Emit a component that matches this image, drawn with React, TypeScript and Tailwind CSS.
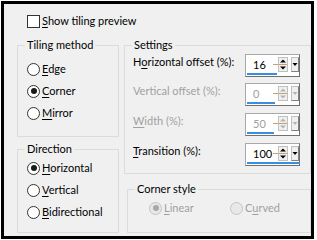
import React from "react";

const font = { fontFamily: 'Lato, "Noto Sans", sans-serif' };

function U({ children }: { children: React.ReactNode }) {
  return <span className="underline underline-offset-[2px] decoration-[1px]">{children}</span>;
}

function Radio({ checked, disabled, label }: { checked?: boolean; disabled?: boolean; label: React.ReactNode }) {
  return (
    <div className="flex items-center h-[22px]">
      <span
        className={`w-[13px] h-[13px] rounded-full border flex items-center justify-center ${
          disabled ? "border-[#c4c4c4] bg-[#e8e8e8]" : "border-[#333333] bg-white"
        }`}
      >
        {checked && <span className={`w-[6px] h-[6px] rounded-full ${disabled ? "bg-[#a8a8a8]" : "bg-[#1a1a1a]"}`} />}
      </span>
      <span className={`ml-[2px] ${disabled ? "text-[#a0a0a0]" : "text-black"}`}>{label}</span>
    </div>
  );
}

function Group({ title, className, children }: { title: string; className: string; children: React.ReactNode }) {
  return (
    <div className={`relative border border-[#dcdcdc] ${className}`}>
      <span className="absolute -top-[9px] left-[7px] px-[2px] bg-[#f0f0f0] leading-[16px]">{title}</span>
      {children}
    </div>
  );
}

function Spin({ value, disabled, bar }: { value: string; disabled?: boolean; bar: number }) {
  const tri = disabled ? "#b4b4b4" : "#000000";
  return (
    <div className="relative w-[55px] h-[23px] bg-white border border-[#a9a9a9] border-r-[#707070] border-b-[#707070]">
      <span className={`absolute left-[7px] top-[3px] leading-[14px] ${disabled ? "text-[#a0a0a0]" : "text-black"}`}>{value}</span>
      <div className="absolute left-[27px] top-[9px] w-[7px] h-[1px] bg-[#c8a070]" />
      <div className="absolute left-[32px] top-[2px] w-[10px] h-[15px] bg-[#f0f0f0] border border-[#c0c0c0]">
        <svg width="8" height="13" viewBox="0 0 8 13" className="block">
          <path d="M1 4.5 L4 1.5 L7 4.5 Z" fill={tri} />
          <path d="M1 8.5 L4 11.5 L7 8.5 Z" fill={tri} />
          <rect x="0" y="6" width="8" height="1" fill="#c8a070" />
        </svg>
      </div>
      <div className="absolute left-[45px] top-[2px] w-[8px] h-[15px] bg-[#f0f0f0] border border-[#c0c0c0] border-r-[#808080] border-b-[#808080]">
        <svg width="6" height="13" viewBox="0 0 6 13" className="block">
          <path d="M0.5 5 L5.5 5 L3 8 Z" fill={tri} />
        </svg>
      </div>
      <div className="absolute left-[1px] bottom-[1px] h-[2px] bg-[#3a8ee0]" style={{ width: bar }} />
    </div>
  );
}

function Row({ label, disabled, children }: { label: React.ReactNode; disabled?: boolean; children: React.ReactNode }) {
  return (
    <div className="flex items-start justify-between h-[23px]">
      <span className={`whitespace-nowrap ${disabled ? "text-[#a0a0a0]" : "text-black"}`}>{label}</span>
      {children}
    </div>
  );
}

export default function App() {
  return (
    <div className="w-[317px] h-[240px] bg-white pt-[1px] pl-[1px] pr-[3px] pb-[1px] text-[11px] leading-[16px]" style={font}>
      <div className="w-full h-full border-[3px] border-black bg-[#f0f0f0] overflow-hidden">
        {/* checkbox */}
        <div className="flex items-center h-[16px] mt-[9px] ml-[23px]">
          <span className="w-[13px] h-[13px] bg-white border border-[#333333]" />
          <span className="ml-[2px]">
            <U>S</U>how tiling preview
          </span>
        </div>

        <div className="flex mt-[16px] ml-[13px]">
          {/* left column */}
          <div className="w-[102px] flex flex-col">
            <Group title="Tiling method" className="h-[92px] pl-[9px] pt-[12px]">
              <Radio label={<><U>E</U>dge</>} />
              <Radio checked label={<><U>C</U>orner</>} />
              <Radio label={<><U>M</U>irror</>} />
            </Group>
            <Group title="Direction" className="h-[84px] mt-[12px] pl-[9px] pt-[7px]">
              <Radio checked label={<><U>H</U>orizontal</>} />
              <Radio label={<><U>V</U>ertical</>} />
              <Radio label={<><U>B</U>idirectional</>} />
            </Group>
          </div>

          {/* right column */}
          <div className="w-[187px] ml-[5px] flex flex-col">
            <Group title="Settings" className="h-[129px] pl-[8px] pr-[10px] pt-[8px]">
              <Row label={<>H<U>o</U>rizontal offset (%):</>}>
                <Spin value="16" bar={30} />
              </Row>
              <div className="h-[6px]" />
              <Row disabled label={<>Vertical offset (%):</>}>
                <Spin value="0" disabled bar={28} />
              </Row>
              <div className="h-[7px]" />
              <Row disabled label={<><U>W</U>idth (%):</>}>
                <Spin value="50" disabled bar={27} />
              </Row>
              <div className="h-[7px]" />
              <Row label={<><U>T</U>ransition (%):</>}>
                <Spin value="100" bar={53} />
              </Row>
            </Group>
            <Group title="Corner style" className="w-[184px] h-[44px] mt-[15px] ml-[3px] pl-[21px] pt-[7px]">
              <div className="flex">
                <div className="w-[81px]">
                  <Radio checked disabled label={<><U>L</U>inear</>} />
                </div>
                <Radio disabled label={<>C<U>u</U>rved</>} />
              </div>
            </Group>
          </div>
        </div>
      </div>
    </div>
  );
}
